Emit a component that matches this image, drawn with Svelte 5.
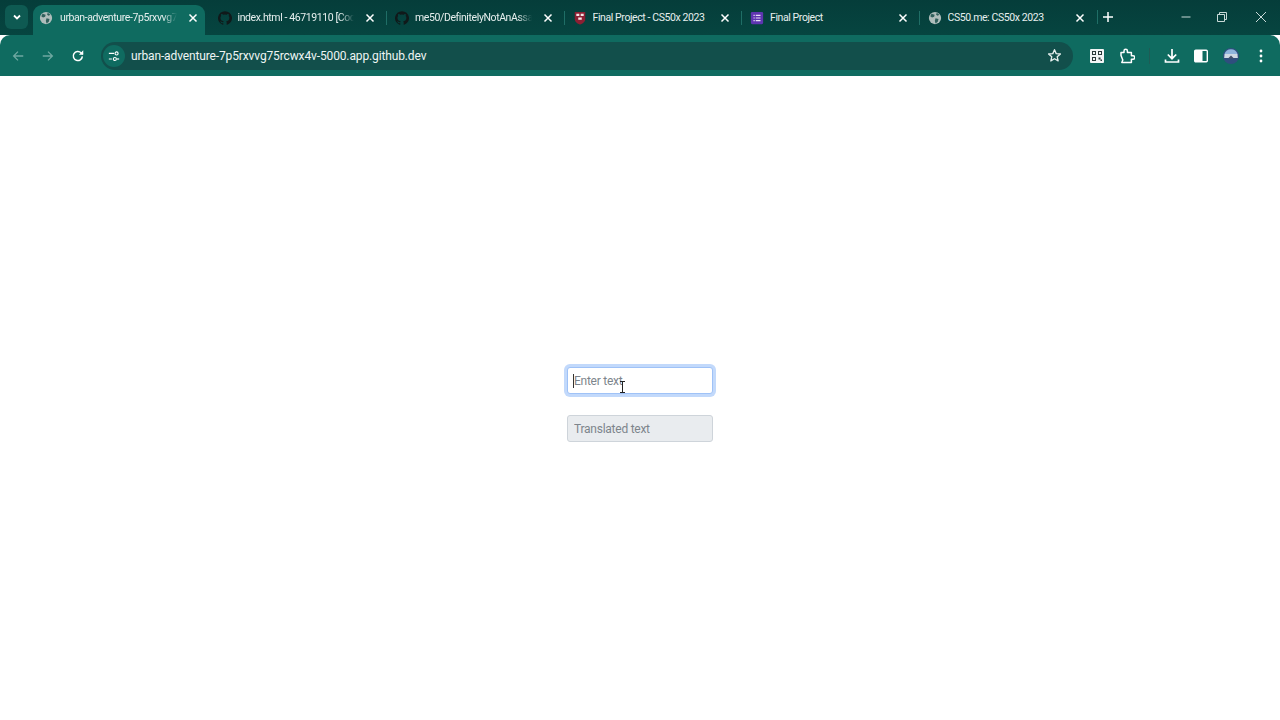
<script>
	const tabs = [
		{ title: 'urban-adventure-7p5rxvvg75rcwx4v-5000.app.github.dev', icon: 'globe', active: true },
		{ title: 'index.html - 46719110 [Codespaces: urban adventure]', icon: 'github' },
		{ title: 'me50/DefinitelyNotAnAssassin', icon: 'github' },
		{ title: 'Final Project - CS50x 2023', icon: 'harvard' },
		{ title: 'Final Project', icon: 'forms' },
		{ title: 'CS50.me: CS50x 2023', icon: 'globe' }
	];
</script>

{#snippet favicon(kind)}
	{#if kind === 'globe'}
		<svg class="fav" viewBox="0 0 16 16">
			<circle cx="8" cy="8" r="7" fill="#aebdbb" />
			<path d="M4 3 7.600 4.400 7 6.600 4.600 7.400 2.600 6zM8.600 8.400l3.400.8-.8 3-2.600 2-.8-3zM10 2l3 2.400-2 1-1.800-1.200z" fill="#2f5f5b" />
		</svg>
	{:else if kind === 'github'}
		<svg class="fav" viewBox="0 0 16 16">
			<path fill="#10191a" d="M8 .2a8 8 0 0 0-2.500 15.600c.4.100.5-.2.5-.4v-1.400c-2.200.5-2.700-1-2.700-1-.4-.9-.9-1.200-.9-1.200-.7-.5.100-.5.100-.5.800.100 1.200.800 1.200.800.700 1.200 1.900.900 2.300.700.100-.5.300-.9.500-1.100-1.800-.2-3.700-.9-3.700-4 0-.9.300-1.600.800-2.100-.1-.2-.4-1 .100-2.100 0 0 .7-.2 2.200.800a7.600 7.600 0 0 1 4 0c1.500-1 2.200-.8 2.200-.8.500 1.100.200 1.900.100 2.100.500.500.800 1.200.800 2.100 0 3.100-1.900 3.800-3.700 4 .300.300.600.800.600 1.500v2.200c0 .2.100.5.600.4A8 8 0 0 0 8 .2z" />
		</svg>
	{:else if kind === 'harvard'}
		<svg class="fav" viewBox="0 0 16 16">
			<path fill="#8c1f33" d="M2 1h12v8c0 3.500-3 5.300-6 6.500C5 14.300 2 12.500 2 9z" />
			<path fill="#f3e6e6" d="M3.800 3h3.400v2.600H3.800zM8.800 3h3.400v2.600H8.800zM6 7.400h4V10H6z" />
		</svg>
	{:else}
		<svg class="fav" viewBox="0 0 16 16">
			<rect x="1" y="1" width="14" height="14" rx="1.500" fill="#5e35b1" />
			<path fill="#e6def5" d="M4 4.200h1.400v1.400H4zM6.600 4.200H12v1.400H6.600zM4 7.300h1.400v1.400H4zM6.600 7.300H12v1.400H6.600zM4 10.400h1.400v1.400H4zM6.600 10.400H12v1.400H6.600z" />
		</svg>
	{/if}
{/snippet}

<div class="chrome">
	<div class="tabstrip">
		<button class="tab-search" aria-label="Search tabs">
			<svg viewBox="0 0 12 12" width="12" height="12"><path d="M3 4.500 6 7.500 9 4.500" fill="none" stroke="#fff" stroke-width="1.800" /></svg>
		</button>
		<div class="tabs">
			{#each tabs as tab, i}
				<div class="tab" class:active={tab.active} class:sep={i > 1}>
					{@render favicon(tab.icon)}
					<span class="title" class:plain={tab.title.length < 28}>{tab.title}</span>
					<svg class="close" viewBox="0 0 10 10" width="10" height="10"><path d="M1.500 1.500 8.500 8.500M8.500 1.500 1.500 8.500" stroke="#fff" stroke-width="1.500" /></svg>
				</div>
			{/each}
		</div>
		<div class="tab-divider"></div>
		<svg class="new-tab" viewBox="0 0 12 12" width="12" height="12"><path d="M6 1v10M1 6h10" stroke="#fff" stroke-width="1.500" /></svg>
		<div class="window-controls">
			<svg class="minimize" viewBox="0 0 12 12" width="12" height="12"><path d="M1.500 6h9" stroke="#c9dad8" /></svg>
			<svg viewBox="0 0 12 12" width="12" height="12"><path d="M1.500 3.500h7v7h-7zM3.500 3.500v-2h7v7h-2" fill="none" stroke="#c9dad8" /></svg>
			<svg viewBox="0 0 12 12" width="12" height="12"><path d="M1 1 11 11M11 1 1 11" stroke="#c9dad8" /></svg>
		</div>
	</div>

	<div class="toolbar">
		<div class="nav">
			<svg viewBox="0 0 16 16" width="14" height="14"><path d="M14 8H3M8 3 3 8l5 5" fill="none" stroke="#6fa8a1" stroke-width="1.500" /></svg>
			<svg viewBox="0 0 16 16" width="14" height="14"><path d="M2 8h11M8 3l5 5-5 5" fill="none" stroke="#6fa8a1" stroke-width="1.500" /></svg>
			<svg viewBox="0 0 16 16" width="14" height="14"><path d="M13 8.500A5.200 5.200 0 1 1 11.500 4.300L13.500 6" fill="none" stroke="#fff" stroke-width="1.700" /><path d="M14 1.500V6.500H9z" fill="#fff" /></svg>
		</div>
		<div class="omnibox">
			<span class="site-info">
				<svg viewBox="0 0 14 14" width="12" height="12">
					<path d="M1 4h6M1 10.500h3.500" stroke="#fff" stroke-width="1.400" />
					<circle cx="10" cy="4" r="1.800" fill="none" stroke="#fff" stroke-width="1.300" />
					<circle cx="8" cy="10.500" r="1.800" fill="none" stroke="#fff" stroke-width="1.300" />
					<path d="M10.500 10.500H13" stroke="#fff" stroke-width="1.400" />
				</svg>
			</span>
			<span class="url">urban-adventure-7p5rxvvg75rcwx4v-5000.app.github.dev</span>
			<svg class="star" viewBox="0 0 16 16" width="15" height="15"><path d="M8 1.800 9.800 6l4.500.4-3.400 3 1 4.400L8 11.500l-3.900 2.300 1-4.400-3.400-3L6.200 6z" fill="none" stroke="#e6f0ef" stroke-width="1.400" stroke-linejoin="round" /></svg>
		</div>
		<div class="actions">
			<svg viewBox="0 0 14 14" width="14" height="14">
				<rect width="14" height="14" rx="1" fill="#f2f5f5" />
				<path fill="#2b3a3a" d="M2 2h4v4H2zM8 2h4v4H8zM2 8h4v4H2zM8.500 8.500h2v2h-2zM10.500 10.500H12V12h-1.500z" />
				<path fill="#f2f5f5" d="M3 3h2v2H3zM9 3h2v2H9zM3 9h2v2H3z" />
			</svg>
			<svg class="puzzle" viewBox="0 0 16 16" width="16" height="16"><path d="M2 4.500h3V3a1.700 1.700 0 0 1 3.400 0v1.500h4v3.300H14a1.700 1.700 0 0 1 0 3.400h-1.600v3.300H2.800l1-2.500-1.800-4.500z" fill="none" stroke="#fff" stroke-width="1.500" stroke-linejoin="round" /></svg>
			<div class="action-sep"></div>
			<svg class="download" viewBox="0 0 16 16" width="16" height="16"><path d="M8 1v9M3.800 6.500 8 10.700l4.200-4.200M1.500 11.500v2.500h13v-2.500" fill="none" stroke="#fff" stroke-width="1.700" /></svg>
			<svg class="panel" viewBox="0 0 14 14" width="14" height="14"><rect x=".7" y="1.200" width="12.600" height="11.600" rx="1" fill="none" stroke="#fff" stroke-width="1.400" /><rect x="1" y="1.500" width="7.500" height="11" fill="#fff" /></svg>
			<svg class="avatar" viewBox="0 0 16 16" width="16" height="16">
				<circle cx="8" cy="8" r="8" fill="#2f4e7e" />
				<path d="M1.500 6a6.800 6.800 0 0 1 13 0z" fill="#8fb4dc" />
				<path d="M1.500 6h13l.3 4H1.200z" fill="#cfd9e4" />
				<path d="M5 10.500 8 7.500l3 3z" fill="#44506a" />
			</svg>
			<svg class="menu" viewBox="0 0 4 14" width="4" height="14"><circle cx="2" cy="2" r="1.400" fill="#fff" /><circle cx="2" cy="7" r="1.400" fill="#fff" /><circle cx="2" cy="12" r="1.400" fill="#fff" /></svg>
		</div>
	</div>
</div>

<main class="page">
	<div class="field">
		<input class="form-control focused" type="text" placeholder="Enter text" />
		<span class="caret"></span>
		<svg class="ibeam" viewBox="0 0 7 12" width="7" height="12"><path d="M1 .5h5M1 11.500h5M3.500 .5v11" stroke="#222" fill="none" /></svg>
	</div>
	<input class="form-control" type="text" placeholder="Translated text" disabled />
</main>

<style>
:global(body) { background: #fff; overflow: hidden; font-family: Roboto, "Liberation Sans", sans-serif; }

.chrome { height: 76px; display: flex; flex-direction: column; color: #fff; }

/* Tab strip */
.tabstrip {
	height: 35px; background: linear-gradient(#053d3a, #064540);
	display: flex; align-items: flex-end;
	padding-left: 5px;
}
.tab-search {
	width: 23px; height: 24px; margin: 0 5px 6px 0; padding: 0;
	display: flex; align-items: center; justify-content: center;
	background: #0e5a52; border: none; border-radius: 6px;
}
.tabs { display: flex; }
.tab {
	width: 177.500px; height: 30px; box-sizing: border-box;
	display: flex; align-items: center;
	padding: 0 11px 5px 9px; position: relative;
	font-size: 10.500px; letter-spacing: -0.4px;
}
.tab.active {
	width: 172px; margin-right: 3.500px;
	background: #0f6b60; border-radius: 9px 9px 0 0;
	padding: 0 7px 5px 6px;
}
.tab.sep::before {
	content: ""; position: absolute; left: 0; top: 6px;
	width: 1px; height: 14px; background: #1f6e66;
}
.fav { width: 14px; height: 14px; flex: none; }
.title {
	flex: 1; min-width: 0; margin-left: 6px;
	white-space: nowrap; overflow: hidden;
	mask-image: linear-gradient(90deg, #000 88%, transparent);
	color: #e6efee;
}
.title.plain { mask-image: none; }
.active .title { margin-left: 7px; }
.close { flex: none; margin-left: 11px; }
.tab-divider { width: 1px; height: 14px; background: #1f6e66; margin: 0 0 11px 1px; }
.new-tab { margin: 0 0 12px 4px; }
.window-controls {
	margin-left: auto; display: flex; gap: 27px;
	padding: 0 13px 12px 0;
}
.minimize { margin-right: -3px; }

/* Toolbar */
.toolbar {
	height: 41px; background: #0f6b60; border-radius: 10px 10px 0 0;
	display: flex; align-items: center;
	padding: 0 12px 0 0;
}
.nav { display: flex; gap: 16px; padding-left: 11px; width: 89px; box-sizing: border-box; }
.omnibox {
	flex: none; width: 972px; height: 28px; margin-left: 12px;
	background: #124f4b; border-radius: 14px;
	display: flex; align-items: center; padding: 0 11px 0 2px; box-sizing: border-box;
}
.site-info {
	width: 22px; height: 22px; border-radius: 50%;
	background: #0f6b60; display: flex; align-items: center; justify-content: center;
}
.url { margin-left: 6px; font-size: 12px; letter-spacing: -0.13px; color: #eef5f4; flex: 1; }
.actions { display: flex; align-items: center; margin-left: 17px; }
.puzzle { margin-left: 15px; }
.action-sep { width: 1px; height: 16px; background: #1f5b55; margin: 0 14px; }
.panel { margin-left: 14px; }
.avatar { margin-left: 15px; }
.menu { margin-left: 20px; }

/* Page */
.page {
	height: 644px; box-sizing: border-box; padding-top: 291px;
	display: flex; flex-direction: column; align-items: center; gap: 21px;
}
.field { position: relative; width: 146px; }
.form-control {
	display: block; width: 146px; height: 27px; box-sizing: border-box;
	padding: 1px 6px 0; font: 12px Roboto, "Liberation Sans", sans-serif;
	letter-spacing: -0.25px;
	color: #212529; background: #fff;
	border: 1px solid #ced4da; border-radius: 3px; outline: none;
}
.form-control::placeholder { color: #7d858c; opacity: 1; }
.form-control:disabled { background: #e9ecef; }
.focused { border-color: #9fc2f7; box-shadow: 0 0 0 3px #c2d9fb; }
.caret {
	position: absolute; left: 6px; top: 7px;
	width: 1px; height: 14px; background: #333;
}
.ibeam { position: absolute; left: 52px; top: 14px; }
</style>
